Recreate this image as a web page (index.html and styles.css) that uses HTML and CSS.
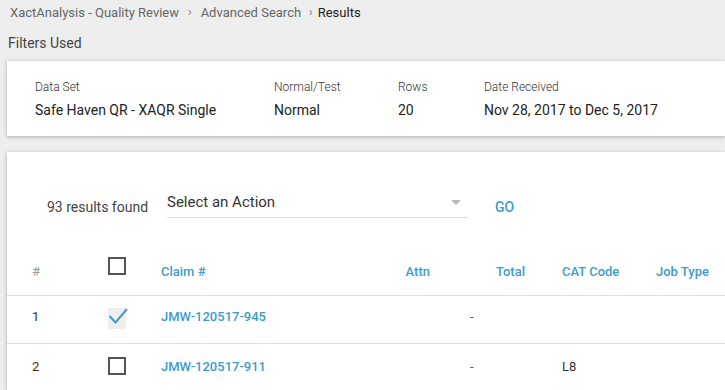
FILE: index.html
```html
<!DOCTYPE html>
<html>
<head>
<meta charset="utf-8">
<link rel="stylesheet" href="styles.css">
</head>
<body>
<div class="crumbs">
  <span class="crumb">XactAnalysis - Quality Review</span>
  <span class="sep">›</span>
  <span class="crumb">Advanced Search</span>
  <span class="sep sep2">›</span>
  <span class="crumb current">Results</span>
</div>
<div class="section-title">Filters Used</div>
<div class="card filters">
  <div class="filter">
    <div class="f-label">Data Set</div>
    <div class="f-value">Safe Haven QR - XAQR Single</div>
  </div>
  <div class="filter">
    <div class="f-label">Normal/Test</div>
    <div class="f-value">Normal</div>
  </div>
  <div class="filter">
    <div class="f-label">Rows</div>
    <div class="f-value">20</div>
  </div>
  <div class="filter">
    <div class="f-label">Date Received</div>
    <div class="f-value">Nov 28, 2017 to Dec 5, 2017</div>
  </div>
</div>
<div class="card results">
  <div class="actions">
    <span class="count">93 results found</span>
    <div class="select">
      <span class="select-text">Select an Action</span>
      <span class="caret"></span>
    </div>
    <span class="go">GO</span>
  </div>
  <div class="row head">
    <div class="c-num">#</div>
    <div class="c-chk"><span class="box"></span></div>
    <div class="c-claim">Claim #</div>
    <div class="c-attn">Attn</div>
    <div class="c-total">Total</div>
    <div class="c-cat">CAT Code</div>
    <div class="c-job">Job Type</div>
  </div>
  <div class="row">
    <div class="c-num">1</div>
    <div class="c-chk"><span class="checked"><svg width="20" height="22" viewBox="0 0 20 22"><path d="M1.5 11 L7.5 17.5 L19 4" fill="none" stroke="#3d9cc6" stroke-width="2"/></svg></span></div>
    <div class="c-claim link">JMW-120517-945</div>
    <div class="c-attn"></div>
    <div class="c-total dash">-</div>
    <div class="c-cat"></div>
    <div class="c-job"></div>
  </div>
  <div class="row last">
    <div class="c-num">2</div>
    <div class="c-chk"><span class="box"></span></div>
    <div class="c-claim link">JMW-120517-911</div>
    <div class="c-attn"></div>
    <div class="c-total dash">-</div>
    <div class="c-cat">L8</div>
    <div class="c-job"></div>
  </div>
</div>
</body>
</html>
```
FILE: styles.css
```css
* { box-sizing: border-box; }
html, body { margin: 0; padding: 0; overflow: hidden; }
body {
  background: #eeeeee;
  font-family: Roboto, "Liberation Sans", sans-serif;
  color: #333;
  width: 725px;
  height: 390px;
}
.crumbs {
  height: 24px;
  display: flex;
  align-items: center;
  padding-left: 10px;
  font-size: 13px;
  color: #666;
}
.sep { font-size: 12px; margin: 0 9px 0 9px; color: #777; }
.sep2 { margin: 0 5px 0 8px; }
.crumb.current { color: #222; }
.section-title {
  height: 37px;
  display: flex;
  align-items: center;
  padding-left: 8px;
  padding-top: 1px;
  font-size: 14px;
  color: #444;
}
.card {
  background: #fff;
  margin-left: 7px;
  box-shadow: 0 1px 4px rgba(0,0,0,0.28);
}
.filters {
  height: 75px;
  display: grid;
  grid-template-columns: 239px 124px 86px auto;
  padding-left: 28px;
  padding-top: 18px;
}
.f-label {
  font-size: 12px;
  font-weight: 300;
  color: #333;
  height: 16px;
  line-height: 16px;
}
.f-value {
  margin-top: 6px;
  font-size: 14px;
  color: #222;
  height: 18px;
  line-height: 18px;
}
.results {
  margin-top: 16px;
  height: 238px;
  padding-top: 29px;
}
.actions {
  height: 48px;
  display: flex;
  align-items: center;
  padding-left: 40px;
}
.count { font-size: 14px; color: #444; width: 120px; margin-top: 4px; }
.select {
  width: 301px;
  height: 32px;
  border-bottom: 1px solid #ddd;
  display: flex;
  align-items: center;
  margin-top: -6px;
  position: relative;
}
.select-text { font-size: 15px; color: #333; }
.caret {
  position: absolute;
  right: 7px;
  top: 14px;
  width: 0; height: 0;
  border-left: 5px solid transparent;
  border-right: 5px solid transparent;
  border-top: 5px solid #bbb;
}
.go {
  margin-left: 27px;
  font-size: 14px;
  font-weight: 500;
  color: #3d9cc6;
  margin-top: 4px;
}
.row {
  display: grid;
  grid-template-columns: 101px 53px 229px 50px 95px 121px auto;
  align-items: center;
  height: 48px;
  padding-bottom: 7px;
  border-bottom: 1px solid #e0e0e0;
  font-size: 13px;
  color: #333;
}
.row.head {
  height: 48px;
  padding-bottom: 0;
  margin-top: 19px;
  color: #3d9cc6;
  font-weight: 500;
}
.row.last { border-bottom: none; height: 45px; padding-bottom: 1px; }
.c-num { padding-left: 25px; }
.head .c-num { color: #999; font-weight: 400; }
.c-attn { text-align: right; padding-right: 10px; }
.c-total { text-align: right; padding-right: 10px; }
.c-total.dash { text-align: left; padding-left: 30px; color: #555; }
.c-cat { padding-left: 27px; }
.c-chk { display: flex; align-items: center; height: 20px; }
.box {
  display: block;
  width: 18px; height: 18px;
  border: 2px solid #555;
}
.head .box { margin-top: -11px; }
.checked {
  display: block;
  width: 18px; height: 21px;
  background: #eeeeee;
  position: relative;
  margin-top: 4px;
}
.checked svg { position: absolute; left: 0; top: -3px; }
.link { color: #3d9cc6; font-weight: 500; }
```
